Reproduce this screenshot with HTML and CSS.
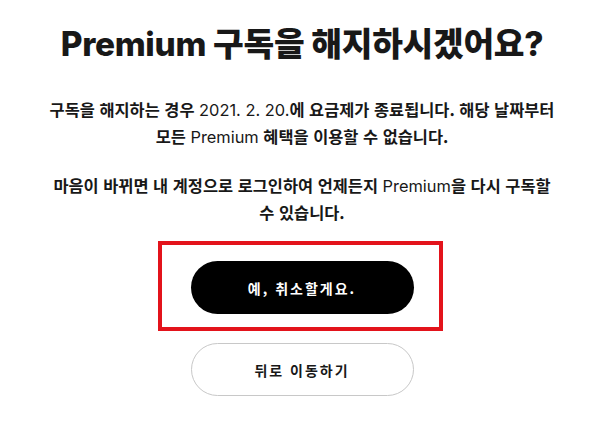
FILE: index.html
```html
<!DOCTYPE html>
<html lang="ko">
<head>
  <meta charset="utf-8" />
  <meta name="viewport" content="width=device-width, initial-scale=1" />
  <title>Premium 구독 해지</title>
  <link rel="stylesheet" href="styles.css">
</head>
<body>
<div class="cancel-content">
  <h1 class="cancel-title">Premium 구독을 해지하시겠어요?</h1>
  <p class="cancel-p">
    구독을 해지하는 경우 <span class="cancel-latin">2021. 2. 20.</span>에 요금제가 종료됩니다. 해당 날짜부터<br />
    모든 <span class="cancel-latin">Premium</span> 혜택을 이용할 수 없습니다.
  </p>
  <p class="cancel-p">
    마음이 바뀌면 내 계정으로 로그인하여 언제든지 <span class="cancel-latin">Premium</span>을 다시 구독할<br />
    수 있습니다.
  </p>
  <div class="cancel-highlight">
    <button class="cancel-button cancel-button--primary" type="button">예, 취소할게요.</button>
  </div>
  <button class="cancel-button cancel-button--secondary" type="button">뒤로 이동하기</button>
</div>
</body>
</html>
```

FILE: styles.css
```css
:root {
  --ink: #181818;
  --black: #000;
  --white: #fff;
  --line: #c8c8c8;
  --mark: #e3131b;
}
html {
  height: 100%;
}
body {
  margin: 0;
  padding: 0;
  background-color: var(--white);
  color: var(--ink);
  font-family: "Noto Sans CJK KR", sans-serif;
}
.cancel-content {
  display: flex;
  flex-direction: column;
  align-items: center;
  padding: 20px 0 0 4px;
  text-align: center;
}
.cancel-title {
  margin: 0 0 28px;
  font-family: Inter, "Noto Sans CJK KR", sans-serif;
  font-size: 33.4px;
  line-height: 48px;
  font-weight: 800;
  letter-spacing: -0.3px;
}
.cancel-p {
  margin: 0 0 22px;
  font-size: 16.4px;
  line-height: 26px;
  font-weight: 700;
  letter-spacing: 0;
}
.cancel-latin {
  font-family: Inter, sans-serif;
  font-weight: 400;
}
.cancel-highlight {
  margin: -6px 0 0 -4px;
  padding: 16px 25px 13px;
  border: 4px solid var(--mark);
}
.cancel-button {
  width: 223px;
  height: 53px;
  border-radius: 27px;
  font-family: "Noto Sans CJK KR", sans-serif;
  font-size: 14px;
  font-weight: 700;
  letter-spacing: 2px;
  cursor: pointer;
}
.cancel-highlight .cancel-button {
  margin-left: 4px;
}
.cancel-button--primary {
  background-color: var(--black);
  color: var(--white);
  border: none;
}
.cancel-button--secondary {
  margin-top: 12px;
  background-color: var(--white);
  color: var(--ink);
  border: 1px solid var(--line);
}
```
